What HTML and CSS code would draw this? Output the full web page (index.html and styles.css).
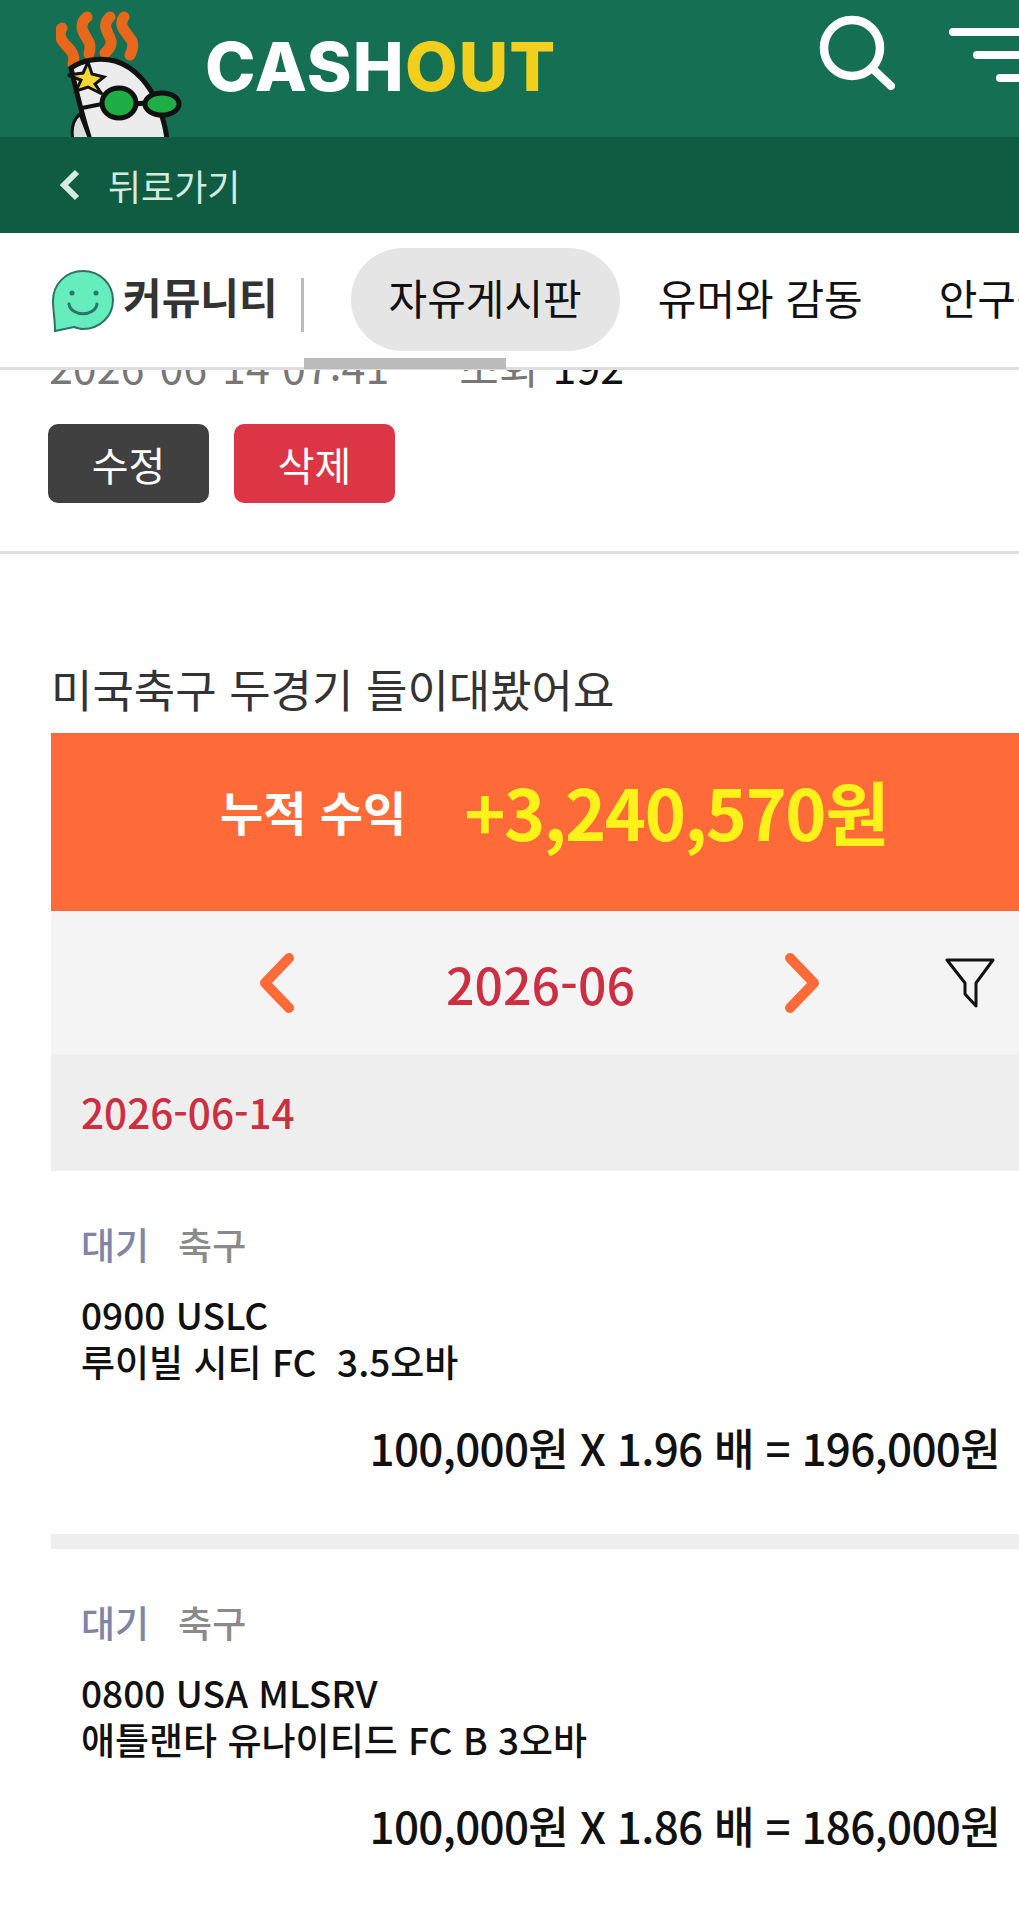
FILE: index.html

```html
<!DOCTYPE html>
<html lang="ko">
<head>
    <meta charset="UTF-8">
    <meta name="viewport" content="width=device-width, initial-scale=1.0">
    <title>CASHOUT 커뮤니티</title>
    <link rel="stylesheet" href="styles.css">
</head>
<body>
    <header class="topbar">
        <div class="brand">
            <svg class="mascot" width="126" height="126" viewBox="56 11 126 126">
                <g fill="none" stroke="#e8671a" stroke-width="11" stroke-linecap="round">
                    <path d="M62 28C56 38 66 44 71 51C75 56 74 60 73 64"/>
                    <path d="M87 17C76 26 86 36 89 42C91 47 90 50 89 54"/>
                    <path d="M110 17C100 26 110 34 111 41C112 46 108 50 105 53"/>
                    <path d="M124 17C117 26 128 34 132 41C134 46 132 51 130 55"/>
                </g>
                <path d="M90 140C82 115 76 90 71 68C82 60 100 57 115 61C135 67 150 85 158 105C163 118 166 128 167 140Z" fill="#ececec" stroke="#111" stroke-width="5"/>
                <path d="M80 114C73 120 71 130 73 140H90Z" fill="#ddd" stroke="#111" stroke-width="3"/>
                <path d="M82 108L102 104" fill="none" stroke="#111" stroke-width="4"/>
                <path d="M88 62L92 74L104 77L95 84L102 94L88 87L76 91L81 80L68 75L83 73Z" fill="#f3d733" stroke="#111" stroke-width="3"/>
                <path d="M134 104L146 103" stroke="#111" stroke-width="5"/>
                <ellipse cx="119" cy="103" rx="17" ry="15" fill="#1fae45" stroke="#111" stroke-width="5"/>
                <ellipse cx="162" cy="104" rx="17" ry="11" fill="#1fae45" stroke="#111" stroke-width="5"/>
            </svg>
            <div class="logo">CASH<span class="logo-out">OUT</span></div>
        </div>
        <svg class="search-icon" width="76" height="76" viewBox="0 0 76 76">
            <circle cx="33" cy="33" r="28" fill="none" stroke="#fff" stroke-width="8.5"/>
            <path d="M54 54L72 71" stroke="#fff" stroke-width="8" stroke-linecap="round"/>
        </svg>
        <div class="menu-icon">
            <span class="menu-line line-a"></span>
            <span class="menu-line line-b"></span>
            <span class="menu-line line-c"></span>
        </div>
    </header>

    <div class="backbar">
        <svg width="22" height="34" viewBox="0 0 22 34">
            <path d="M18 4L5 17L18 30" fill="none" stroke="#d5ebe0" stroke-width="6"/>
        </svg>
        <span class="back-label">뒤로가기</span>
    </div>

    <nav class="tabs">
        <svg class="tabs-icon" width="66" height="66" viewBox="0 0 66 66">
            <path d="M33 3C16 3 3 16 3 33C3 42 5 51 5 63L24 59C27 60 30 61 33 61C50 61 63 48 63 32C63 16 50 3 33 3Z" fill="#66edbe" stroke="#2c7565" stroke-width="2"/>
            <circle cx="22" cy="25" r="2.5" fill="#2c7565"/>
            <circle cx="46" cy="25" r="2.5" fill="#2c7565"/>
            <path d="M19 36C21 49 45 49 47 36" fill="none" stroke="#2c7565" stroke-width="3" stroke-linecap="round"/>
        </svg>
        <strong class="tabs-title">커뮤니티</strong>
        <span class="tabs-sep"></span>
        <a class="tab tab-active">자유게시판</a>
        <a class="tab">유머와 감동</a>
        <a class="tab">안구정화</a>
        <span class="tabs-scroll"></span>
    </nav>

    <main>
        <div class="post-meta">
            <span class="meta-date">2026-06-14 07:41</span>
            <span class="meta-views">조회 <b class="meta-count">192</b></span>
        </div>
        <div class="post-actions">
            <button class="btn btn-edit">수정</button>
            <button class="btn btn-delete">삭제</button>
        </div>

        <article class="post-body">
            <p class="post-title">미국축구 두경기 들이대봤어요</p>
            <div class="summary">
                <span class="summary-label">누적 수익</span>
                <span class="summary-value">+3,240,570원</span>
            </div>
            <div class="month-row">
                <svg class="month-prev" width="40" height="60" viewBox="0 0 40 60">
                    <path d="M32 5L8 30L32 55" fill="none" stroke="#ff6b38" stroke-width="10" stroke-linecap="round" stroke-linejoin="round"/>
                </svg>
                <span class="month-label">2026-06</span>
                <svg class="month-next" width="40" height="60" viewBox="0 0 40 60">
                    <path d="M8 5L32 30L8 55" fill="none" stroke="#ff6b38" stroke-width="10" stroke-linecap="round" stroke-linejoin="round"/>
                </svg>
                <svg class="month-filter" width="50" height="52" viewBox="0 0 50 52">
                    <path d="M2 3H48L31 26V49L20 37V26Z" fill="none" stroke="#111" stroke-width="3" stroke-linejoin="round"/>
                </svg>
            </div>
            <div class="day-row">2026-06-14</div>

            <section class="bet">
                <div class="bet-tags"><span class="tag-status">대기</span><span class="tag-sport">축구</span></div>
                <div class="bet-game">0900 USLC<br>루이빌 시티 FC&nbsp; 3.5오바</div>
                <div class="bet-amount">100,000원 X 1.96 배 = 196,000원</div>
            </section>
            <section class="bet">
                <div class="bet-tags"><span class="tag-status">대기</span><span class="tag-sport">축구</span></div>
                <div class="bet-game">0800 USA MLSRV<br>애틀랜타 유나이티드 FC B 3오바</div>
                <div class="bet-amount">100,000원 X 1.86 배 = 186,000원</div>
            </section>
        </article>
    </main>
</body>
</html>
```

FILE: styles.css

```css
html, body {
    margin: 0;
    height: 1928px;
    overflow: hidden;
    background: #fff;
}
body {
    font-family: "Noto Sans CJK KR", "Noto Sans", sans-serif;
    color: #111;
}
.topbar {
    height: 137px;
    background: #146f53;
    display: flex;
    align-items: flex-start;
    overflow: hidden;
}
.brand {
    display: flex;
    align-items: flex-start;
    margin-left: 56px;
    margin-top: 11px;
    width: 763px;
}
.logo {
    font-family: Inter, "Liberation Sans", sans-serif;
    font-weight: 800;
    font-size: 68px;
    letter-spacing: 1.2px;
    line-height: 78px;
    color: #fff;
    margin-left: 23px;
    margin-top: 16px;
}
.logo-out {
    color: #f2cf1d;
}
.search-icon {
    margin-top: 15px;
}
.menu-icon {
    flex: 1;
    padding-top: 28px;
    display: flex;
    flex-direction: column;
    align-items: flex-end;
    gap: 15px;
}
.menu-line {
    display: block;
    height: 8px;
    background: #fff;
    border-radius: 4px 0 0 4px;
}
.line-a { width: 70px; }
.line-b { width: 46px; }
.line-c { width: 23px; }

.backbar {
    height: 96px;
    background: #0f5c42;
    display: flex;
    align-items: center;
    padding-left: 59px;
}
.back-label {
    margin-left: 27px;
    font-size: 36px;
    color: #d5ebe0;
}

.tabs {
    position: relative;
    z-index: 2;
    height: 137px;
    box-shadow: inset 0 -3px 0 #ddd;
    background: #fff;
    display: flex;
    align-items: flex-start;
    overflow: hidden;
    white-space: nowrap;
}
.tabs-icon {
    flex: none;
    margin: 35px 0 0 50px;
}
.tabs-title {
    margin: 35px 0 0 7px;
    font-size: 42px;
    line-height: 56px;
    color: #333;
}
.tabs-sep {
    flex: none;
    width: 3px;
    height: 54px;
    margin: 45px 0 0 23px;
    background: #bbb;
}
.tab {
    flex: none;
    height: 103px;
    margin-top: 15px;
    padding: 0 38px;
    font-size: 42px;
    line-height: 98px;
    color: #111;
}
.tab-active {
    margin-left: 47px;
    background: #e5e5e5;
    border-radius: 52px;
}
.tabs-scroll {
    position: absolute;
    left: 304px;
    bottom: 1px;
    width: 202px;
    height: 11px;
    background: #bbb;
}

.post-meta {
    margin-top: -30px;
    padding-left: 49px;
    display: flex;
    font-size: 43px;
    line-height: 50px;
    color: #777;
}
.meta-views {
    margin-left: 70px;
}
.meta-count {
    margin-left: 2px;
    font-weight: 400;
    color: #111;
}
.post-actions {
    display: flex;
    gap: 25px;
    padding: 34px 0 48px 48px;
    border-bottom: 3px solid #ddd;
}
.btn {
    width: 161px;
    height: 79px;
    border: 0;
    border-radius: 10px;
    font-family: inherit;
    font-size: 40px;
    color: #fff;
    padding: 0;
}
.btn-edit { background: #404040; }
.btn-delete { background: #dc3545; }

.post-body {
    padding-left: 51px;
}
.post-title {
    margin: 104px 0 0;
    font-size: 45px;
    line-height: 62px;
    color: #333;
}
.summary {
    margin-top: 13px;
    height: 178px;
    box-sizing: border-box;
    background: #ff6b38;
    display: flex;
    align-items: center;
    padding: 0 0 24px 169px;
}
.summary-label {
    font-size: 47px;
    font-weight: 700;
    color: #fff;
}
.summary-value {
    margin-left: 58px;
    font-size: 70px;
    font-weight: 700;
    letter-spacing: -1.5px;
    color: #fff21a;
}
.month-row {
    height: 144px;
    background: #f4f4f4;
    display: flex;
    align-items: center;
    padding-left: 206px;
}
.month-prev { flex: none; margin-right: 149px; }
.month-label {
    margin-right: 147px;
    font-size: 50px;
    font-weight: 500;
    color: #cc2f42;
}
.month-next { flex: none; margin-right: 123px; }
.month-filter { flex: none; }
.day-row {
    height: 116px;
    background: #eee;
    padding-left: 30px;
    font-size: 40.5px;
    font-weight: 500;
    line-height: 113px;
    color: #cc2f42;
}
.bet {
    height: 378px;
    box-sizing: border-box;
    padding: 43px 19px 0 30px;
    border-bottom: 15px solid #eee;
}
.bet:last-child {
    border-bottom: 0;
}
.bet-tags {
    display: flex;
    gap: 29px;
    font-size: 37px;
    font-weight: 500;
    line-height: 60px;
}
.tag-status { color: #7f86a3; }
.tag-sport { color: #8a8a8a; }
.bet-game {
    margin-top: 17px;
    font-size: 37px;
    font-weight: 500;
    line-height: 47px;
    color: #111;
}
.bet-amount {
    margin-top: 32px;
    text-align: right;
    font-size: 44px;
    font-weight: 500;
    letter-spacing: -0.7px;
    line-height: 60px;
    color: #111;
}
```
